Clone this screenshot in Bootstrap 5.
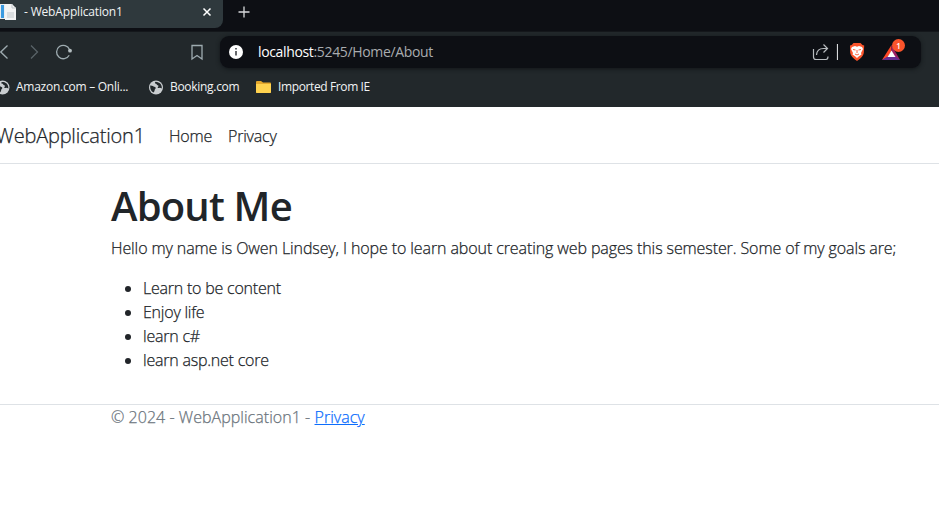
<!DOCTYPE html>
<html lang="en">
<head>
<meta charset="utf-8">
<meta name="viewport" content="width=device-width, initial-scale=1">
<title>- WebApplication1</title>
<link href="https://cdn.jsdelivr.net/npm/bootstrap@5.3.0/dist/css/bootstrap.min.css" rel="stylesheet">
<style>
body{font-family:"Segoe UI","Open Sans","Noto Sans",sans-serif;font-size:16px;font-weight:300;overflow:hidden;height:517px;background:#fff}
svg{display:block;flex:none}
.ui-text{font-size:12px;font-weight:400;color:#f1f3f4;white-space:nowrap;line-height:16px}
.tabstrip{height:32px;background:#0d0f14;border-bottom:1px solid #14171b}
.browser-tab{width:223px;height:28px;background:#2f393d;border-radius:0 0 8px 0;padding-bottom:4px}
.tab-title{margin-left:8px;letter-spacing:-.17px}
.toolbar{height:40px;background:#22282b}
.address{width:701px;height:32px;margin-left:17px;background:#0d0f14;border-radius:9px;box-shadow:0 1px 4px #111518}
.address-text{font-size:14px;font-weight:400;color:#a9acaf;line-height:20px;white-space:nowrap;letter-spacing:-.35px}
.address-text span{color:#fff}
.bookmarks{height:35px;background:#22282b;padding-bottom:5px}
.bm-amazon{width:126px;letter-spacing:-.25px}
.bm-booking{width:86px;letter-spacing:-.3px}
.bm-import{letter-spacing:-.38px}
header,main,footer{-webkit-text-stroke:.25px currentColor}
.site-nav{height:57px;border-bottom:1px solid #dee2e6;padding-top:1px}
.site-brand{width:149px;margin-left:-4px;font-size:20px;letter-spacing:-.2px;white-space:nowrap;color:#212529}
.site-links{letter-spacing:-.2px;margin-left:24px;gap:16px}
.site-links .nav-link{color:#212529}
.page-body{margin-left:111px}
h1{font-size:40px;font-weight:600;line-height:48px;letter-spacing:-.8px;padding-top:2px;height:48px;-webkit-text-stroke:0}
.intro{letter-spacing:-.1px;white-space:nowrap}
.goals{letter-spacing:-.22px}
.site-footer{border-top:1px solid #dee2e6;padding-left:111px;letter-spacing:.04px;color:#6c757d}
.site-footer a{color:#0d6efd}
.rewards-count{position:absolute;left:10px;top:-4px;width:13px;height:13px;border-radius:50%;background:#fb542b;color:#fff;font-size:8px;font-weight:600;line-height:13px;text-align:center}
</style>
<script src="https://cdn.jsdelivr.net/npm/bootstrap@5.3.0/dist/js/bootstrap.bundle.min.js"></script>
</head>
<body>
<svg width="0" height="0" class="position-absolute"><defs>
<g id="globe"><circle cx="7.5" cy="7.5" r="7" fill="#c9cdd0"/><path d="M1.700 5.500c2-.3 3 .8 4.200 1.200 1.600.5 1.800 1.400.8 2.200-.8.7-.2 1.900-1.700 3.600C2.700 11.400 1.400 9 1.700 5.500zM7 1.700c-1 .8-.7 2 .5 2 .8 0 .7 1.300 1.700 1.500 1 .3 1 1.200.2 1.700-.7.5.3 1.500 1.400 1 .9-.4 1.600.4 2.500.5.4-3.500-2-6.500-6.300-6.700z" fill="#22282b"/></g>
</defs></svg>
<div class="tabstrip d-flex align-items-start">
  <div class="browser-tab d-flex align-items-center">
    <svg width="16" height="18" viewBox="0 0 16 18"><path d="M0 1h5v15H0z" fill="#e8edf0"/><path d="M1 2h3v13H1z" fill="#3b9be0"/><path d="M5 1h7l4 4v12H5z" fill="#f3f4f4"/><path d="M12 1v4h4M7 10h7M7 12h7M7 14h7" fill="none" stroke="#c1c7ca"/></svg>
    <span class="ui-text tab-title">- WebApplication1</span>
    <svg class="ms-auto me-2" width="16" height="16" viewBox="0 0 16 16"><path d="m4.500 4.500 7 7m0-7-7 7" stroke="#fff" stroke-width="1.500"/></svg>
  </div>
  <svg class="mt-1" width="42" height="16" viewBox="0 0 42 16"><path d="M15.500 8h11M21 2.500v11" stroke="#d7d9db" stroke-width="1.300"/></svg>
</div>
<div class="toolbar d-flex align-items-center">
  <svg width="203" height="20" viewBox="0 0 203 20" fill="none" stroke="#9eabb0" stroke-width="1.300"><path d="M7.500 3.500.8 10l6.700 6.500"/><path d="m31 3.500 6.500 6.500-6.500 6.500" stroke="#596368"/><path d="M69.200 13.200A6.700 6.700 0 1 1 69.500 7.500"/><circle cx="70" cy="8.700" r="1.900" fill="#b5bec1" stroke="none"/><path d="M192 3.500h10v13.500l-5-3.500-5 3.500z"/></svg>
  <div class="address d-flex align-items-center">
    <svg width="38" height="16" viewBox="0 0 38 16"><circle cx="16" cy="8" r="7" fill="#fff"/><path d="M16 7v4.500M16 4v1.600" stroke="#33363b" stroke-width="1.500"/></svg>
    <span class="address-text"><span>localhost</span>:5245/Home/About</span>
    <svg class="ms-auto" width="26" height="20" viewBox="0 0 26 20" fill="none" stroke="#b8bcbf" stroke-width="1.200"><path d="M1.500 7v8q0 2.500 2.500 2.500h10q2 0 2-3M4.500 13q.5-6.500 7-6.500h4M11.500 2.500l4 4-4 4"/><path d="M25.500 2v16" stroke="#d7d9db"/></svg>
    <svg class="ms-2 me-1" width="24" height="20" viewBox="-1 0 24 20"><path d="M6.500 1h7l2 2 1.700.5-.4 7.500q-.7 4-6.800 8-6-4-6.800-8L3 3.500 4.700 3z" fill="#fb542b"/><path d="m5 5 3-.9 2 .6 2-.6 3 .9 1 2-2 4 .5 1.500-2.600 1.700L10 16l-1.900-1.800-2.600-1.700L6 11 4 7z" fill="#fff"/><path d="m6 7.500 2.500.5m5.500-.5-2.500.5M10 8v3m-2 1 2 1 2-1" stroke="#fb542b" stroke-width=".9" fill="none"/></svg>
    <div class="position-relative ms-2">
      <svg width="39" height="18" viewBox="0 0 39 18"><path d="M9.500 2v6l-4 6.500L0 17z" fill="#ff4724"/><path d="M9.500 2 18 17l-5-2.500L9.500 8z" fill="#9e1f63"/><path d="m0 17 5.500-3.500h8L18 17z" fill="#662d91"/><path d="m9.500 7.500 4 6.500h-8z" fill="#fff"/></svg>
      <span class="rewards-count">1</span>
    </div>
  </div>
</div>
<div class="bookmarks d-flex align-items-center">
  <svg width="16" height="15" viewBox="5 0 16 15"><use href="#globe"/></svg>
  <span class="ui-text bm-amazon">Amazon.com – Onli...</span>
  <svg width="28" height="15" viewBox="-6.500 0 28 15"><use href="#globe"/></svg>
  <span class="ui-text bm-booking">Booking.com</span>
  <svg width="22" height="14" viewBox="0 0 22 14"><path d="M0 2q0-1 1-1h4l2 1.500h7q1 0 1 1V12q0 1-1 1H1q-1 0-1-1z" fill="#e4a72c"/><path d="M0 4h15v8q0 1-1 1H1q-1 0-1-1z" fill="#ffd24f"/></svg>
  <span class="ui-text bm-import">Imported From IE</span>
</div>
<header>
  <nav class="site-nav d-flex align-items-center mb-3">
    <a class="site-brand text-decoration-none" href="#">WebApplication1</a>
    <div class="site-links d-flex"><a class="nav-link" href="#">Home</a><a class="nav-link" href="#">Privacy</a></div>
  </nav>
</header>
<main class="page-body pb-3">
  <h1 class="mb-2">About Me</h1>
  <p class="intro mb-3">Hello my name is Owen Lindsey, I hope to learn about creating web pages this semester. Some of my goals are;</p>
  <ul class="goals mb-3"><li>Learn to be content</li><li>Enjoy life</li><li>learn c#</li><li>learn asp.net core</li></ul>
</main>
<footer class="site-footer">© 2024 - WebApplication1 - <a href="#">Privacy</a></footer>
</body>
</html>
